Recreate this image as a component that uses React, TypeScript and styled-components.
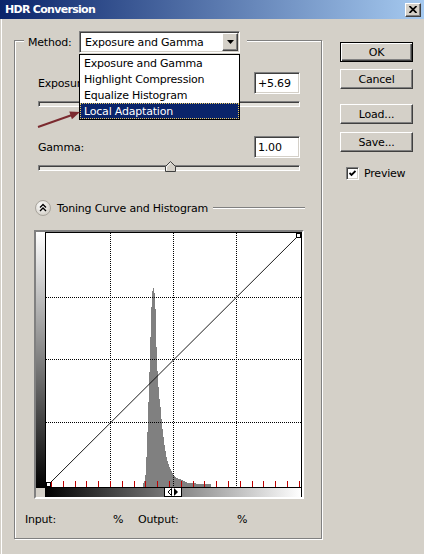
import React from "react";
import styled, { createGlobalStyle } from "styled-components";

const GlobalStyle = createGlobalStyle`
  html, body { margin: 0; padding: 0; background: #d4d0c8; }
  body { font-family: "DejaVu Sans", Tahoma, sans-serif; font-size: 11px; }
`;

const Window = styled.div`
  position: relative;
  width: 424px;
  height: 554px;
  overflow: hidden;
  background: #d4d0c8;
  box-shadow: inset 1px 0 0 #d4d0c8, inset 2px 0 0 #fff;
  color: #000;
  font-family: "DejaVu Sans", Tahoma, sans-serif;
  font-size: 11px;
  letter-spacing: -0.2px;
`;

const TitleBar = styled.div`
  height: 19px;
  display: flex;
  align-items: center;
  justify-content: space-between;
  padding: 0 3px 0 5px;
  background: linear-gradient(to right, #0a246a, #a6caf0);
  color: #fff;
  font-weight: bold;
  letter-spacing: -0.7px;
`;

const raised = `
  border: 1px solid;
  border-color: #fff #404040 #404040 #fff;
  box-shadow: inset -1px -1px 0 #808080;
  background: #d4d0c8;
`;

const sunken = `
  border: 1px solid;
  border-color: #808080 #fff #fff #808080;
  box-shadow: inset 1px 1px 0 #404040, inset -1px -1px 0 #d4d0c8;
  background: #fff;
`;

const CloseButton = styled.div`
  ${raised}
  box-sizing: border-box;
  width: 16px;
  height: 14px;
  display: flex;
  align-items: center;
  justify-content: center;
`;

const Body = styled.div`
  display: flex;
  align-items: flex-start;
  padding: 21px 0 0 14px;
`;

const GroupBox = styled.div`
  position: relative;
  box-sizing: border-box;
  width: 308px;
  height: 499px;
  border: 1px solid #808080;
  box-shadow: 1px 1px 0 #fff, inset 1px 1px 0 #fff;
  display: flex;
  flex-direction: column;
  padding: 0 15px 0 10px;
`;

const GroupHeader = styled.div`
  align-self: flex-start;
  display: flex;
  align-items: center;
  height: 22px;
  margin: -10px 0 0 -1px;
  padding: 0 7px 0 4px;
  background: #d4d0c8;
`;

const HeaderLabel = styled.span`
  width: 51px;
`;

const Combo = styled.div`
  ${sunken}
  position: relative;
  box-sizing: border-box;
  width: 161px;
  height: 22px;
  padding: 1px;
  display: flex;
`;

const ComboText = styled.div`
  flex: 1;
  display: flex;
  align-items: center;
  padding-left: 4px;
`;

const ComboButton = styled.div`
  ${raised}
  box-sizing: border-box;
  width: 16px;
  display: flex;
  align-items: center;
  justify-content: center;
`;

const DropList = styled.ul`
  position: absolute;
  top: 22px;
  left: -1px;
  right: -1px;
  z-index: 10;
  margin: 0;
  padding: 0;
  list-style: none;
  border: 1px solid #000;
  background: #fff;
`;

const DropItem = styled.li<{ $selected?: boolean }>`
  height: 16px;
  display: flex;
  align-items: center;
  padding-left: 4px;
  background: ${({ $selected }) => ($selected ? "#0a246a" : "#fff")};
  color: ${({ $selected }) => ($selected ? "#fff" : "#000")};
  outline: ${({ $selected }) => ($selected ? "1px dotted #e8c860" : "none")};
  outline-offset: -1px;
`;

const ValueRow = styled.div<{ $top: number }>`
  margin-top: ${({ $top }) => $top}px;
  padding: 0 6px 0 13px;
  display: flex;
  align-items: center;
  justify-content: space-between;
`;

const ValueBox = styled.div`
  ${sunken}
  box-sizing: border-box;
  width: 46px;
  height: 22px;
  display: flex;
  align-items: center;
  padding-left: 3px;
`;

const Track = styled.div`
  position: relative;
  box-sizing: border-box;
  height: 6px;
  margin: 7px 6px 0 13px;
  border: 1px solid;
  border-color: #808080 #fff #fff #808080;
  box-shadow: inset 1px 1px 0 #404040;
  background: #e4e2dc;
`;

const Thumb = styled.svg<{ $left: number }>`
  position: absolute;
  top: -5px;
  left: ${({ $left }) => $left}px;
  display: block;
`;

const SectionHeader = styled.div`
  margin-top: 29px;
  height: 16px;
  display: flex;
  align-items: center;
  gap: 6px;
  padding-left: 10px;
`;

const SectionLine = styled.div`
  flex: 1;
  height: 0;
  border-top: 1px solid #808080;
  border-bottom: 1px solid #fff;
  margin: 0 1px 0 -1px;
`;

const CurveBox = styled.div`
  align-self: flex-start;
  margin: 14px 0 0 9px;
  display: grid;
  grid-template-columns: 9px 257px;
  grid-template-rows: 256px 9px;
  border: 2px solid;
  border-color: #808080 #fff #fff #808080;
`;

const VerticalRamp = styled.div`
  background: linear-gradient(to bottom, #fff, #000);
`;

const Corner = styled.div`
  background: #d4d0c8;
`;

const Plot = styled.div`
  box-sizing: border-box;
  border: 1px solid #000;
  background: #fff;
  svg { display: block; }
`;

const HorizontalRamp = styled.div`
  position: relative;
  box-sizing: border-box;
  border-right: 1px solid #000;
  background: linear-gradient(to right, #000, #fff);
`;

const RampHandle = styled.div`
  position: absolute;
  top: -1px;
  left: 119px;
  box-sizing: border-box;
  width: 18px;
  height: 10px;
  border: 1px solid #000;
  background: #fff;
  display: flex;
  align-items: center;
  justify-content: center;
`;

const InfoRow = styled.div`
  margin-top: 14px;
  display: grid;
  grid-template-columns: 88px 25px 99px auto;
  line-height: 14px;
`;

const SideColumn = styled.div`
  margin: 2px 0 0 18px;
  width: 73px;
  display: flex;
  flex-direction: column;
  gap: 7px;
`;

const Button = styled.div<{ $default?: boolean; $space?: number }>`
  box-sizing: border-box;
  height: 20px;
  margin-top: ${({ $space }) => $space ?? 0}px;
  display: flex;
  align-items: center;
  justify-content: center;
  background: #d4d0c8;
  border: 1px solid;
  border-color: ${({ $default }) => ($default ? "#000" : "#fff #404040 #404040 #fff")};
  box-shadow: ${({ $default }) =>
    $default
      ? "inset 1px 1px 0 #fff, inset -1px -1px 0 #404040, inset -2px -2px 0 #808080"
      : "inset -1px -1px 0 #808080"};
`;

const CheckRow = styled.label`
  margin: 8px 0 0 6px;
  display: flex;
  align-items: center;
  gap: 5px;
`;

const CheckBox = styled.span`
  ${sunken}
  box-sizing: border-box;
  width: 13px;
  height: 13px;
  display: flex;
  align-items: center;
  justify-content: center;
`;

const Annotation = styled.svg`
  position: absolute;
  left: 36px;
  top: 108px;
  z-index: 20;
  pointer-events: none;
`;

const histogram: [number, number][] = [
  [143, 4], [144, 6], [145, 12], [146, 30], [147, 55], [148, 85], [149, 115],
  [150, 150], [151, 180], [152, 196], [153, 199], [154, 194], [155, 178],
  [156, 140], [157, 116], [158, 100], [159, 88], [160, 80], [161, 68], [162, 58],
  [163, 50], [164, 42], [165, 36], [166, 30], [167, 26], [168, 23], [169, 20],
  [170, 18], [171, 16], [172, 14], [173, 12], [174, 11], [175, 10], [176, 9],
  [177, 9], [178, 8], [179, 8], [180, 8], [181, 7], [182, 7], [183, 6], [184, 6],
  [185, 5], [186, 5],
];
for (let x = 187; x <= 195; x++) histogram.push([x, 4]);
for (let x = 196; x <= 210; x++) histogram.push([x, 3]);

const gridX = [64, 127, 190];
const gridY = [64, 126, 189];
const ticks = Array.from({ length: 22 }, (_, i) => Math.round(5 + i * 11.8));

const CurvePlot = () => (
  <svg width="255" height="254" shapeRendering="crispEdges">
    {histogram.map(([x, h]) => (
      <rect key={x} x={x - 46} y={254 - h} width="1" height={h} fill="#808080" />
    ))}
    {gridX.map((x) => (
      <line key={"v" + x} x1={x + 0.5} y1="0" x2={x + 0.5} y2="254" stroke="#000" strokeDasharray="1 1" />
    ))}
    {gridY.map((y) => (
      <line key={"h" + y} x1="0" y1={y + 0.5} x2="255" y2={y + 0.5} stroke="#000" strokeDasharray="1 1" />
    ))}
    {ticks.map((x) => (
      <line key={"t" + x} x1={x + 0.5} y1="248" x2={x + 0.5} y2="254" stroke="#c00000" />
    ))}
    <line x1="0" y1="254" x2="255" y2="0" stroke="#000" shapeRendering="auto" strokeWidth="0.9" />
    <rect x="0.5" y="249.5" width="4" height="4" fill="#fff" stroke="#000" />
    <rect x="250.5" y="0.5" width="4" height="4" fill="#fff" stroke="#000" />
  </svg>
);

const SliderThumb = ({ left }: { left: number }) => (
  <Thumb $left={left} width="11" height="11" viewBox="0 0 11 11">
    <path d="M5.5 0.5 L10.5 5.5 L10.5 10.5 L0.5 10.5 L0.5 5.5 Z" fill="#d4d0c8" stroke="#404040" />
    <path d="M5.5 1.9 L1.5 5.9 L1.5 9.5" fill="none" stroke="#fff" />
  </Thumb>
);

export default function App() {
  return (
    <Window>
      <GlobalStyle />
      <TitleBar>
        <span>HDR Conversion</span>
        <CloseButton>
          <svg width="8" height="7" viewBox="0 0 8 7">
            <path d="M0.5 0 L7.5 7 M7.5 0 L0.5 7" stroke="#000" strokeWidth="1.7" />
          </svg>
        </CloseButton>
      </TitleBar>
      <Body>
        <GroupBox>
          <GroupHeader>
            <HeaderLabel>Method:</HeaderLabel>
            <Combo>
              <ComboText>Exposure and Gamma</ComboText>
              <ComboButton>
                <svg width="7" height="4" viewBox="0 0 7 4">
                  <path d="M0 0 H7 L3.5 4 Z" fill="#000" />
                </svg>
              </ComboButton>
              <DropList>
                <DropItem>Exposure and Gamma</DropItem>
                <DropItem>Highlight Compression</DropItem>
                <DropItem>Equalize Histogram</DropItem>
                <DropItem $selected>Local Adaptation</DropItem>
              </DropList>
            </Combo>
          </GroupHeader>

          <ValueRow $top={19}>
            <span>Exposure:</span>
            <ValueBox>+5.69</ValueBox>
          </ValueRow>
          <Track>
            <SliderThumb left={110} />
          </Track>

          <ValueRow $top={29}>
            <span>Gamma:</span>
            <ValueBox>1.00</ValueBox>
          </ValueRow>
          <Track>
            <SliderThumb left={126} />
          </Track>

          <SectionHeader>
            <svg width="16" height="16" viewBox="0 0 16 16">
              <defs>
                <radialGradient id="knob" cx="0.4" cy="0.35" r="0.7">
                  <stop offset="0" stopColor="#ffffff" />
                  <stop offset="1" stopColor="#d0ccc4" />
                </radialGradient>
              </defs>
              <circle cx="8" cy="8" r="7.5" fill="url(#knob)" stroke="#a8a49c" />
              <path d="M5 7.5 L8 4.5 L11 7.5 M5 11 L8 8 L11 11" fill="none" stroke="#000" strokeWidth="1.4" />
            </svg>
            <span>Toning Curve and Histogram</span>
            <SectionLine />
          </SectionHeader>

          <CurveBox>
            <VerticalRamp />
            <Plot>
              <CurvePlot />
            </Plot>
            <Corner />
            <HorizontalRamp>
              <RampHandle>
                <svg width="12" height="8" viewBox="0 0 12 8">
                  <path d="M4.5 0.5 L4.5 7.5 L1 4 Z" fill="#fff" stroke="#000" strokeWidth="1" />
                  <path d="M7 0 L7 8 L11 4 Z" fill="#000" />
                </svg>
              </RampHandle>
            </HorizontalRamp>
          </CurveBox>

          <InfoRow>
            <span>Input:</span>
            <span>%</span>
            <span>Output:</span>
            <span>%</span>
          </InfoRow>
        </GroupBox>

        <SideColumn>
          <Button $default>OK</Button>
          <Button>Cancel</Button>
          <Button $space={8}>Load...</Button>
          <Button $space={1}>Save...</Button>
          <CheckRow>
            <CheckBox>
              <svg width="7" height="7" viewBox="0 0 7 7">
                <path d="M0.5 3 L2.5 5 L6.5 1" fill="none" stroke="#000" strokeWidth="1.8" />
              </svg>
            </CheckBox>
            <span>Preview</span>
          </CheckRow>
        </SideColumn>
      </Body>

      <Annotation width="48" height="24" viewBox="0 0 48 24">
        <line x1="2" y1="19" x2="36" y2="7" stroke="#7b2a2f" strokeWidth="2" />
        <path d="M44 4 L35.9 11.2 L33.3 3.6 Z" fill="#7b2a2f" />
      </Annotation>
    </Window>
  );
}
